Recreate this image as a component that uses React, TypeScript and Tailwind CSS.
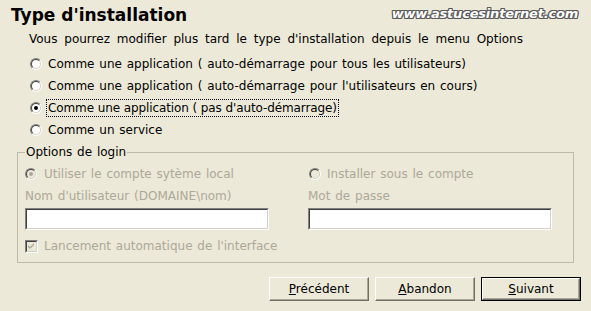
import React from 'react';

function Radio({ checked = false, disabled = false }: { checked?: boolean; disabled?: boolean }) {
  return (
    <span className="inline-flex w-[12px] h-[12px] shrink-0 rounded-full border border-t-[#808080] border-l-[#808080] border-b-white border-r-white">
      <span
        className={
          'flex w-full h-full items-center justify-center rounded-full border border-t-[#404040] border-l-[#404040] border-b-[#D4D0C8] border-r-[#D4D0C8] ' +
          (disabled ? 'bg-[#ECE9D8]' : 'bg-white')
        }
      >
        {checked && (
          <span className={'block w-[4px] h-[4px] rounded-full ' + (disabled ? 'bg-[#ACA899]' : 'bg-black')} />
        )}
      </span>
    </span>
  );
}

function Checkbox() {
  return (
    <span className="inline-flex w-[13px] h-[13px] shrink-0 border border-t-[#808080] border-l-[#808080] border-b-white border-r-white">
      <span className="flex w-full h-full items-center justify-center border border-t-[#404040] border-l-[#404040] border-b-[#D4D0C8] border-r-[#D4D0C8] bg-[#ECE9D8]">
        <svg width="7" height="7" viewBox="0 0 7 7">
          <path d="M0 2 L2 4 L6 0 L6 2 L2 6 L0 4 Z" fill="#ACA899" />
        </svg>
      </span>
    </span>
  );
}

function TextBox({ width }: { width: string }) {
  return (
    <div className={width + ' h-[22px] border border-t-[#808080] border-l-[#808080] border-b-white border-r-white'}>
      <div className="h-full w-full bg-white border border-t-[#404040] border-l-[#404040] border-b-[#D4D0C8] border-r-[#D4D0C8]" />
    </div>
  );
}

function Button({ children, primary = false }: { children: React.ReactNode; primary?: boolean }) {
  return (
    <button type="button" className={'w-[100px] h-[24px] ' + (primary ? 'border border-black' : '')}>
      <div className="flex h-full w-full items-center justify-center border border-t-white border-l-white border-b-[#716F64] border-r-[#716F64] bg-[#ECE9D8] shadow-[inset_-1px_-1px_0_#ACA899]">
        {children}
      </div>
    </button>
  );
}

export default function App() {
  const options = [
    "Comme une application ( auto-démarrage pour tous les utilisateurs)",
    "Comme une application ( auto-démarrage pour l'utilisateurs en cours)",
    "Comme une application ( pas d'auto-démarrage)",
    'Comme un service',
  ];

  return (
    <div className="w-[591px] h-[311px] bg-[#ECE9D8] text-black text-[12px] leading-[14px] [word-spacing:1px] font-['DejaVu_Sans',Verdana,sans-serif] overflow-hidden">
      <div className="flex justify-between items-start pt-[5px] pl-[11px] pr-[13px]">
        <h1 className="text-[17px] leading-[20px] font-bold [word-spacing:0px]">Type d'installation</h1>
        <span className="mt-[1px] text-[13px] leading-[16px] font-bold italic text-white tracking-[-0.2px] [word-spacing:0px] [text-shadow:1px_0_0_#5a5a5a,-1px_0_0_#5a5a5a,0_1px_0_#5a5a5a,0_-1px_0_#5a5a5a,1px_1px_0_#5a5a5a,-1px_-1px_0_#5a5a5a,1px_-1px_0_#5a5a5a,-1px_1px_0_#5a5a5a]">
          www.astucesinternet.com
        </span>
      </div>

      <p className="mt-[7px] pl-[29px] [word-spacing:3px]">
        Vous pourrez modifier plus tard le type d'installation depuis le menu Options
      </p>

      <div className="mt-[7px] pl-[30px] flex flex-col">
        {options.map((label, i) => (
          <div key={i} className="h-[22px] flex items-center gap-[4px]">
            <Radio checked={i === 2} />
            <span
              className={
                'px-[1px] py-[1px] border ' +
                (i === 2 ? 'border-dotted border-black [word-spacing:0px] tracking-[-0.1px]' : 'border-transparent')
              }
            >
              {label}
            </span>
          </div>
        ))}
      </div>

      <fieldset className="mt-[4px] mx-[17px] border border-[#BEBBAA] px-[7px] pb-[8px]">
        <legend className="px-[1px] leading-[14px]">Options de login</legend>
        <div className="grid grid-cols-[283px_1fr] text-[#ACA899]">
          <div className="pt-[5px] h-[25px] flex items-center gap-[7px]">
            <Radio checked disabled />
            <span>Utiliser le compte sytème local</span>
          </div>
          <div className="pt-[5px] h-[25px] flex items-center gap-[6px] pl-[1px]">
            <Radio disabled />
            <span>Installer sous le compte</span>
          </div>
          <div className="mt-[5px]">Nom d'utilisateur (DOMAINE\nom)</div>
          <div className="mt-[5px]">Mot de passe</div>
          <div className="mt-[5px]">
            <TextBox width="w-[244px]" />
          </div>
          <div className="mt-[5px]">
            <TextBox width="w-[244px]" />
          </div>
          <div className="col-span-2 mt-[8px] h-[16px] flex items-center gap-[6px]">
            <Checkbox />
            <span>Lancement automatique de l'interface</span>
          </div>
        </div>
      </fieldset>

      <div className="mt-[14px] flex justify-end gap-[6px] pr-[10px]">
        <Button>
          <span>
            <span className="underline">P</span>récédent
          </span>
        </Button>
        <Button>
          <span>
            <span className="underline">A</span>bandon
          </span>
        </Button>
        <Button primary>
          <span>
            <span className="underline">S</span>uivant
          </span>
        </Button>
      </div>
    </div>
  );
}
